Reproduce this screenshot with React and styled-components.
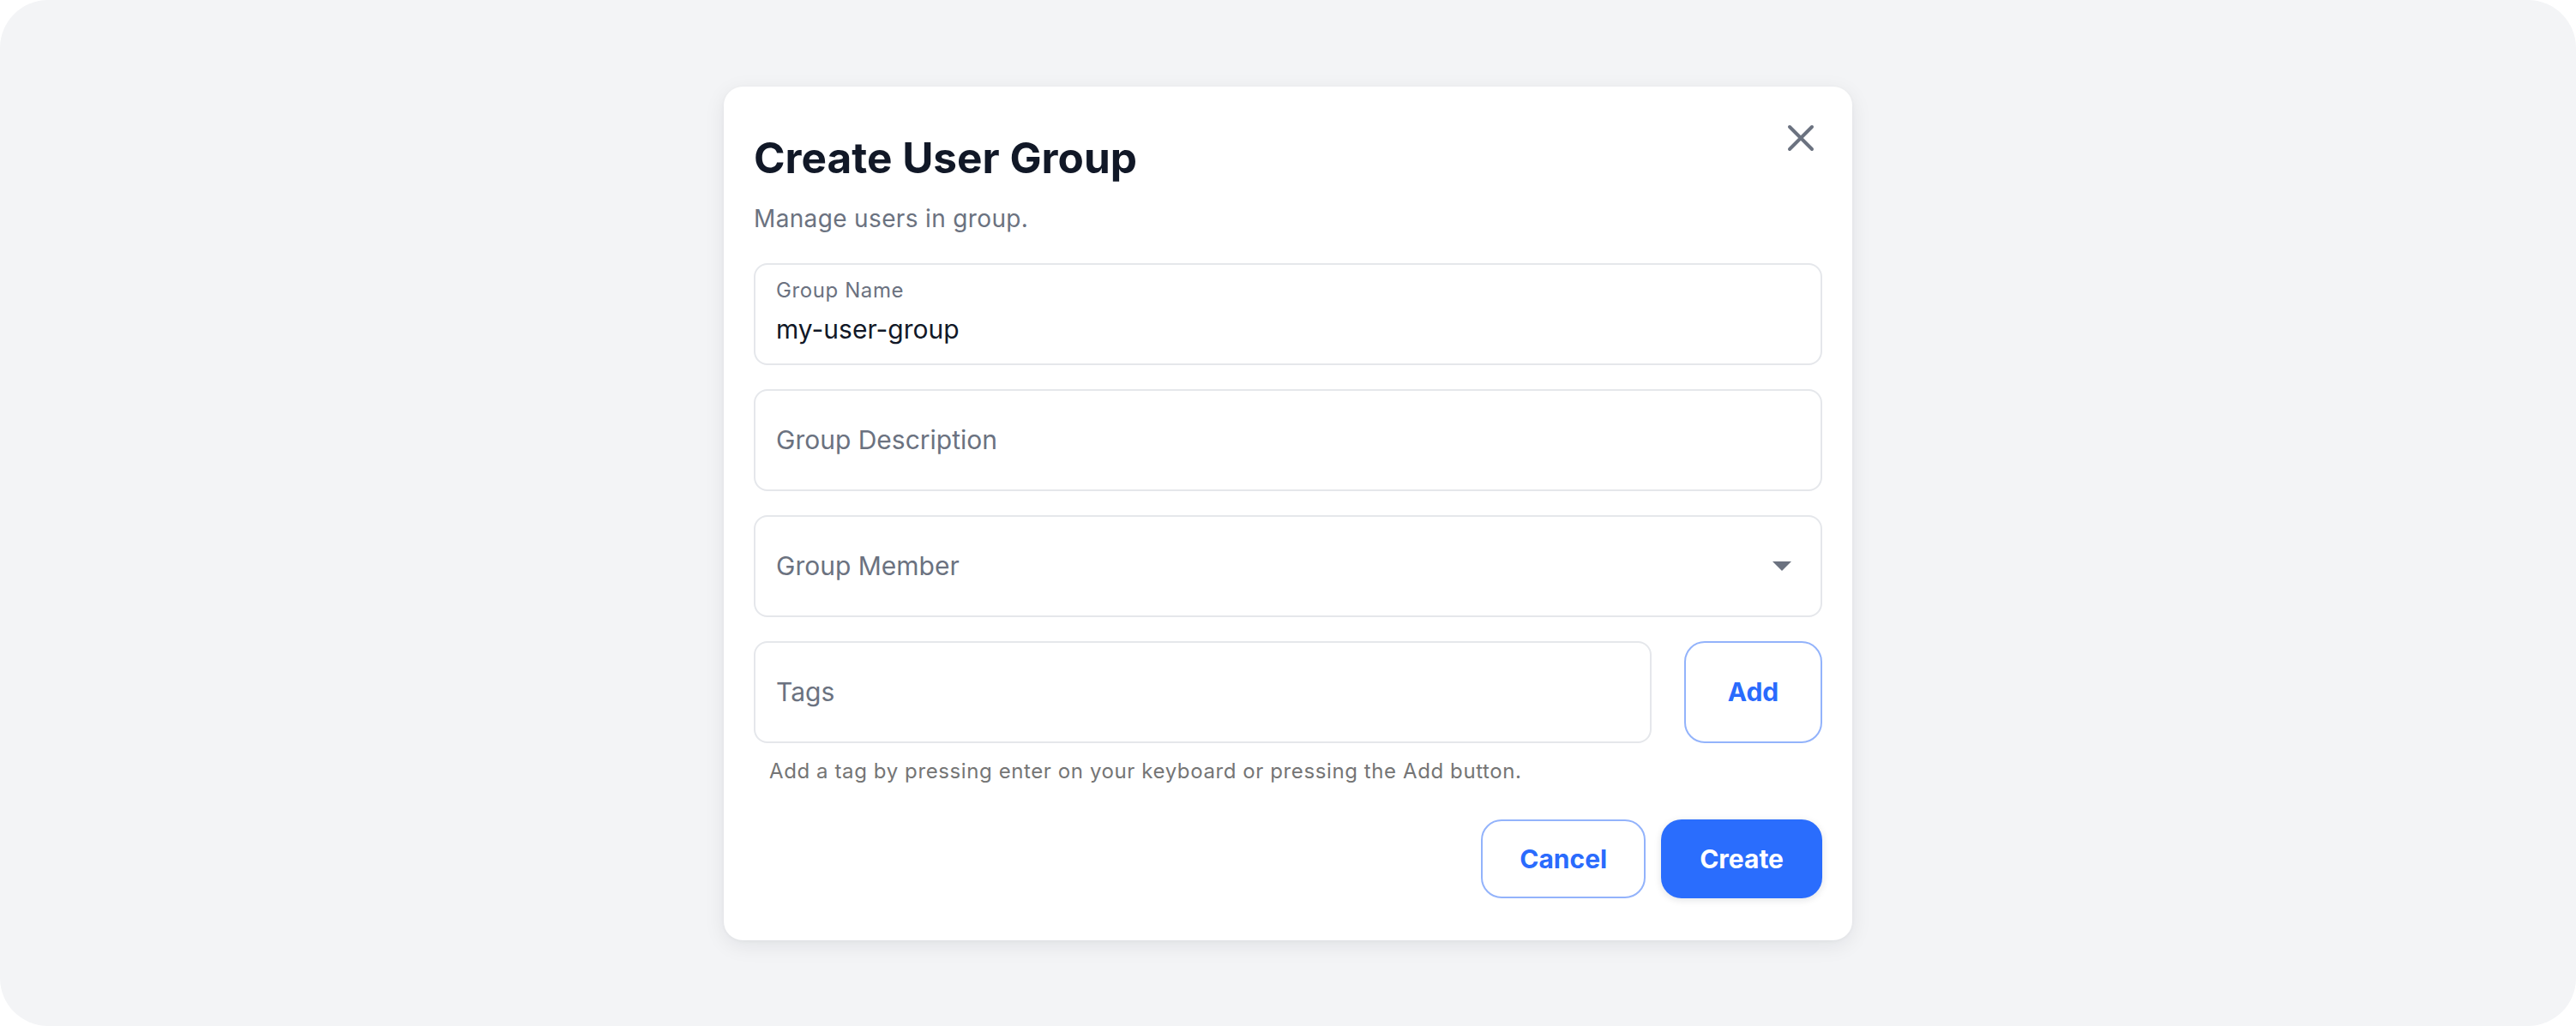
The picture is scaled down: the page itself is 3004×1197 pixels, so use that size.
import React from "react";
import styled, { createGlobalStyle } from "styled-components";

const Global = createGlobalStyle`
  html, body { margin: 0; padding: 0; background: #ffffff; }
  body { font-family: Inter, "Noto Sans", "Liberation Sans", sans-serif; }
  * { box-sizing: border-box; }
`;

const Frame = styled.div`
  width: 100vw;
  height: 100vh;
  background: #f3f4f6;
  border-radius: 56px;
  display: flex;
  align-items: center;
  justify-content: center;
`;

const Dialog = styled.div`
  position: relative;
  width: 1316px;
  background: #ffffff;
  border-radius: 22px;
  box-shadow: 0 6px 24px rgba(17, 24, 39, 0.08), 0 1px 4px rgba(17, 24, 39, 0.04);
  padding: 54px 35px 49px 35px;
  display: flex;
  flex-direction: column;
`;

const CloseButton = styled.button`
  position: absolute;
  top: 40px;
  right: 40px;
  width: 40px;
  height: 40px;
  padding: 0;
  border: none;
  background: transparent;
  cursor: pointer;
  display: flex;
  align-items: center;
  justify-content: center;
`;

const Title = styled.h2`
  margin: 0;
  font-size: 49.5px;
  line-height: 58px;
  font-weight: 700;
  color: #111827;
`;

const Subtitle = styled.p`
  margin: 25px 0 0 0;
  font-size: 28px;
  line-height: 34px;
  letter-spacing: 0.35px;
  color: #6b7280;
`;

const Fields = styled.div`
  margin-top: 35px;
  display: flex;
  flex-direction: column;
  gap: 28px;
`;

const Field = styled.div`
  height: 119px;
  border: 2px solid #e5e7eb;
  border-radius: 16px;
  padding: ${(p) => (p.$labeled ? "15px 24px 0 24px" : "0 24px")};
  display: flex;
  align-items: ${(p) => (p.$labeled ? "flex-start" : "center")};
  flex: ${(p) => (p.$grow ? 1 : "none")};
`;

const FieldColumn = styled.div`
  display: flex;
  flex-direction: column;
  flex: 1;
  min-width: 0;
`;

const Label = styled.label`
  font-size: 24px;
  line-height: 29px;
  letter-spacing: 0.6px;
  color: #6b7280;
  margin-bottom: 13px;
`;

const Input = styled.input`
  width: 100%;
  height: 36px;
  padding: 0;
  border: none;
  outline: none;
  background: transparent;
  font-family: inherit;
  font-size: 30px;
  line-height: 36px;
  color: #111827;
  &::placeholder {
    color: #6b7280;
    opacity: 1;
  }
`;

const SelectText = styled.span`
  flex: 1;
  font-size: 30px;
  line-height: 36px;
  color: #6b7280;
`;

const Caret = styled.svg`
  width: 22px;
  height: 11px;
  margin-right: 10px;
  flex: none;
`;

const TagRow = styled.div`
  display: flex;
  gap: 38px;
`;

const OutlineButton = styled.button`
  height: ${(p) => (p.$tall ? "119px" : "92px")};
  width: ${(p) => (p.$width ? p.$width : "auto")};
  padding: 0 43px;
  border: 2px solid #93b3fb;
  border-radius: 24px;
  background: #ffffff;
  color: #2a6bfd;
  font-family: inherit;
  font-size: 30px;
  font-weight: 700;
  cursor: pointer;
  flex: none;
`;

const PrimaryButton = styled.button`
  height: 92px;
  padding: 0 45px;
  border: none;
  border-radius: 24px;
  background: #2a6dfd;
  color: #ffffff;
  font-family: inherit;
  font-size: 30px;
  font-weight: 700;
  cursor: pointer;
  box-shadow: 0 2px 8px rgba(17, 24, 39, 0.12);
`;

const Helper = styled.p`
  margin: 18px 0 0 18px;
  font-size: 24px;
  line-height: 29px;
  letter-spacing: 0.6px;
  color: #757575;
`;

const Actions = styled.div`
  margin-top: 42px;
  display: flex;
  justify-content: flex-end;
  gap: 18px;
`;

export default function App() {
  return (
    <>
      <Global />
      <Frame>
        <Dialog>
          <CloseButton aria-label="Close">
            <svg width="40" height="40" viewBox="0 0 40 40">
              <path
                d="M7 7 L33 33 M33 7 L7 33"
                stroke="#6b7280"
                strokeWidth="4"
                strokeLinecap="round"
                fill="none"
              />
            </svg>
          </CloseButton>
          <Title>Create User Group</Title>
          <Subtitle>Manage users in group.</Subtitle>
          <Fields>
            <Field $labeled>
              <FieldColumn>
                <Label>Group Name</Label>
                <Input defaultValue="my-user-group" />
              </FieldColumn>
            </Field>
            <Field>
              <Input placeholder="Group Description" />
            </Field>
            <Field>
              <SelectText>Group Member</SelectText>
              <Caret viewBox="0 0 22 11">
                <path d="M0 0 L22 0 L11 11 Z" fill="#6b7280" />
              </Caret>
            </Field>
            <TagRow>
              <Field $grow>
                <Input placeholder="Tags" />
              </Field>
              <OutlineButton $tall $width="161px">Add</OutlineButton>
            </TagRow>
          </Fields>
          <Helper>
            Add a tag by pressing enter on your keyboard or pressing the Add button.
          </Helper>
          <Actions>
            <OutlineButton>Cancel</OutlineButton>
            <PrimaryButton>Create</PrimaryButton>
          </Actions>
        </Dialog>
      </Frame>
    </>
  );
}
